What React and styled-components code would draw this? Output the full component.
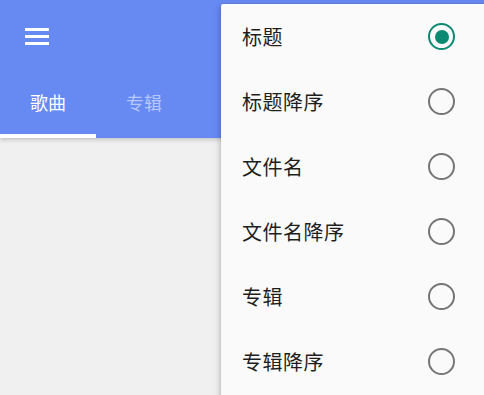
import React from "react";
import styled, { createGlobalStyle } from "styled-components";

const Global = createGlobalStyle`
  html, body { margin: 0; padding: 0; }
  body {
    width: 484px; height: 395px; overflow: hidden;
    background: #f0f0f0;
    font-family: Roboto, "Noto Sans CJK SC", sans-serif;
  }
`;

const Screen = styled.div`
  position: relative;
  width: 484px;
  height: 395px;
  background: #f0f0f0;
  overflow: hidden;
`;

const AppBar = styled.header`
  background: #6689f2;
  height: 138px;
  display: flex;
  flex-direction: column;
  box-shadow: 0 2px 4px rgba(0,0,0,0.18);
`;

const Toolbar = styled.div`
  height: 72px;
  display: flex;
  align-items: center;
  padding-left: 25px;
`;

const MenuButton = styled.div`
  width: 24px;
  display: flex;
  flex-direction: column;
  gap: 4px;
`;

const Bar = styled.span`
  display: block;
  height: 3px;
  background: #fff;
`;

const Tabs = styled.div`
  flex: 1;
  display: flex;
`;

const Tab = styled.div`
  width: 96px;
  display: flex;
  align-items: center;
  justify-content: center;
  font-family: "Noto Sans CJK SC", sans-serif;
  font-size: 18px;
  color: ${p => (p.$active ? "#ffffff" : "rgba(255,255,255,0.55)")};
  padding-bottom: 2px;
  border-bottom: 4px solid ${p => (p.$active ? "#ffffff" : "transparent")};
`;

const Menu = styled.div`
  position: absolute;
  left: 221px;
  top: 4px;
  width: 280px;
  padding-bottom: 20px;
  background: #fafafa;
  box-shadow: -1px 2px 6px rgba(0,0,0,0.22), 0 0 2px rgba(0,0,0,0.12);
  border-radius: 2px;
  display: flex;
  flex-direction: column;
`;

const Item = styled.div`
  box-sizing: border-box;
  height: 65px;
  width: 234px;
  display: flex;
  align-items: center;
  justify-content: space-between;
  padding-left: 21px;
`;

const Label = styled.span`
  font-family: "Noto Sans CJK SC", sans-serif;
  font-size: 20px;
  color: #1e1e1e;
  letter-spacing: 0.5px;
`;

const Radio = styled.span`
  box-sizing: border-box;
  width: 27px;
  height: 27px;
  border-radius: 50%;
  border: 2.8px solid ${p => (p.$checked ? "#0a8a72" : "#757575")};
  display: flex;
  align-items: center;
  justify-content: center;
  &::after {
    content: "";
    width: 14px;
    height: 14px;
    border-radius: 50%;
    background: ${p => (p.$checked ? "#0a8a72" : "transparent")};
  }
`;

const items = ["标题", "标题降序", "文件名", "文件名降序", "专辑", "专辑降序"];

export default function App() {
  return (
    <Screen>
      <Global />
      <AppBar>
        <Toolbar>
          <MenuButton>
            <Bar />
            <Bar />
            <Bar />
          </MenuButton>
        </Toolbar>
        <Tabs>
          <Tab $active>歌曲</Tab>
          <Tab>专辑</Tab>
        </Tabs>
      </AppBar>
      <Menu>
        {items.map((t, i) => (
          <Item key={t}>
            <Label>{t}</Label>
            <Radio $checked={i === 0} />
          </Item>
        ))}
      </Menu>
    </Screen>
  );
}
